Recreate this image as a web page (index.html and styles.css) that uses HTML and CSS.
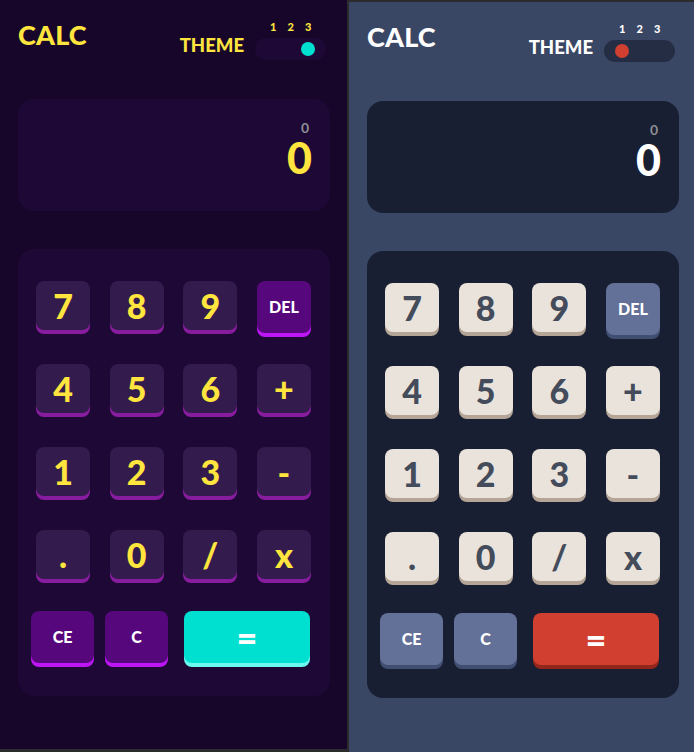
FILE: index.html
```html
<!DOCTYPE html>
<html lang="en">
<head>
<meta charset="utf-8">
<title>Calculator themes</title>
<link rel="stylesheet" href="styles.css">
</head>
<body>
<div class="stage">
  <main class="calc theme-3">
    <header class="top">
      <h1 class="logo">CALC</h1>
      <div class="theme">
        <span class="theme-label">THEME</span>
        <div class="switch">
          <div class="switch-nums"><span>1</span><span>2</span><span>3</span></div>
          <div class="switch-track"><span class="switch-knob"></span></div>
        </div>
      </div>
    </header>
    <section class="screen">
      <div class="screen-prev">0</div>
      <div class="screen-cur">0</div>
    </section>
    <section class="keypad">
      <div class="keys">
        <button class="key">7</button>
        <button class="key">8</button>
        <button class="key">9</button>
        <button class="key key-fn key-del">DEL</button>
        <button class="key">4</button>
        <button class="key">5</button>
        <button class="key">6</button>
        <button class="key">+</button>
        <button class="key">1</button>
        <button class="key">2</button>
        <button class="key">3</button>
        <button class="key">-</button>
        <button class="key">.</button>
        <button class="key">0</button>
        <button class="key">/</button>
        <button class="key">x</button>
      </div>
      <div class="keys-bottom">
        <button class="key key-fn key-small">CE</button>
        <button class="key key-fn key-small">C</button>
        <button class="key key-eq">=</button>
      </div>
    </section>
  </main>
  <main class="calc theme-1">
    <header class="top">
      <h1 class="logo">CALC</h1>
      <div class="theme">
        <span class="theme-label">THEME</span>
        <div class="switch">
          <div class="switch-nums"><span>1</span><span>2</span><span>3</span></div>
          <div class="switch-track"><span class="switch-knob"></span></div>
        </div>
      </div>
    </header>
    <section class="screen">
      <div class="screen-prev">0</div>
      <div class="screen-cur">0</div>
    </section>
    <section class="keypad">
      <div class="keys">
        <button class="key">7</button>
        <button class="key">8</button>
        <button class="key">9</button>
        <button class="key key-fn key-del">DEL</button>
        <button class="key">4</button>
        <button class="key">5</button>
        <button class="key">6</button>
        <button class="key">+</button>
        <button class="key">1</button>
        <button class="key">2</button>
        <button class="key">3</button>
        <button class="key">-</button>
        <button class="key">.</button>
        <button class="key">0</button>
        <button class="key">/</button>
        <button class="key">x</button>
      </div>
      <div class="keys-bottom">
        <button class="key key-fn key-small">CE</button>
        <button class="key key-fn key-small">C</button>
        <button class="key key-eq">=</button>
      </div>
    </section>
  </main>
</div>
</body>
</html>
```
FILE: styles.css
```css
html, body {
  margin: 0;
  padding: 0;
  background: #2b2b2b;
}

body {
  font-family: "Lato", "Liberation Sans", sans-serif;
}

.stage {
  display: flex;
  gap: 2px;
  height: 752px;
  overflow: hidden;
}

.calc {
  box-sizing: border-box;
  padding-left: 18px;
  background: var(--page);
  color: var(--text);
}

.theme-3 {
  --page: #17062a;
  --panel: #1e0836;
  --text: #ffe53d;
  --key: #331c4d;
  --key-shadow: #881c9e;
  --key-text: #ffe53d;
  --fn: #56077c;
  --fn-shadow: #be15f4;
  --eq: #00e0d1;
  --eq-shadow: #6cf9f1;
  --knob: #00e0d1;
  --track: #1e0836;
  --screen-text: #ffe53d;
  width: 347px;
  height: 749px;
}

.theme-1 {
  --page: #3a4764;
  --panel: #181f33;
  --text: #ffffff;
  --key: #eae3dc;
  --key-shadow: #b4a597;
  --key-text: #444b5a;
  --fn: #637097;
  --fn-shadow: #404e72;
  --eq: #d03f2f;
  --eq-shadow: #93261a;
  --knob: #d03f2f;
  --track: #242d44;
  --screen-text: #ffffff;
  width: 345px;
  height: 750px;
  margin-top: 2px;
}

/* header */
.top {
  display: flex;
  justify-content: space-between;
  align-items: flex-start;
  width: 308px;
  height: 99px;
}

.logo {
  margin: 21px 0 0;
  font-size: 27px;
  line-height: 28px;
  font-weight: 900;
  letter-spacing: 0.2px;
}

.theme {
  display: flex;
  align-items: flex-start;
  gap: 11px;
  margin-top: 21px;
}

.theme-label {
  margin-top: 15px;
  font-size: 18.5px;
  line-height: 19px;
  font-weight: 900;
}

.switch-nums {
  display: grid;
  grid-template-columns: repeat(3, 17.5px);
  padding-left: 9.5px;
  height: 11px;
  margin-bottom: 6px;
  font-size: 11px;
  line-height: 11px;
  font-weight: 900;
  text-align: center;
}

.switch-track {
  box-sizing: border-box;
  display: flex;
  width: 71px;
  height: 22px;
  padding: 4px 11px;
  border-radius: 11px;
  background: var(--track);
}

.theme-3 .switch-track {
  justify-content: flex-end;
}

.switch-knob {
  width: 14px;
  height: 14px;
  border-radius: 50%;
  background: var(--knob);
}

/* screen */
.screen {
  box-sizing: border-box;
  width: 312px;
  height: 112px;
  margin-bottom: 38px;
  padding: 22px 18px 0 0;
  border-radius: 16px;
  background: var(--panel);
  text-align: right;
}

.screen-prev {
  margin-right: 3px;
  margin-bottom: 3px;
  font-size: 14px;
  line-height: 14px;
  font-weight: 700;
  color: #8d8d92;
}

.screen-cur {
  font-size: 43px;
  line-height: 40px;
  font-weight: 900;
  color: var(--screen-text);
}

/* keypad */
.keypad {
  box-sizing: border-box;
  width: 312px;
  height: 447px;
  padding: 32px 19px 0 18px;
  border-radius: 16px;
  background: var(--panel);
}

.keys {
  display: grid;
  grid-template-columns: repeat(4, 54px);
  justify-content: space-between;
  align-items: start;
  row-gap: 34px;
}

.key {
  display: flex;
  align-items: center;
  justify-content: center;
  height: 49px;
  padding: 0;
  border: 0;
  border-radius: 8px;
  background: var(--key);
  box-shadow: 0 4px 0 var(--key-shadow);
  color: var(--key-text);
  font-family: inherit;
  font-size: 34px;
  line-height: 1;
  font-weight: 900;
}

.key-fn {
  background: var(--fn);
  box-shadow: 0 4px 0 var(--fn-shadow);
  color: #ffffff;
  font-size: 16px;
}

.key-del {
  height: 52px;
  margin-bottom: -3px;
}

.keys-bottom {
  display: flex;
  margin: 32px 0 0 -5px;
}

.key-small {
  width: 63px;
  height: 52px;
}

.key-small + .key-small {
  margin-left: 11px;
}

.key-eq {
  width: 126px;
  height: 52px;
  margin-left: 16px;
  background: var(--eq);
  box-shadow: 0 4px 0 var(--eq-shadow);
  color: #ffffff;
  font-size: 36px;
}
```
